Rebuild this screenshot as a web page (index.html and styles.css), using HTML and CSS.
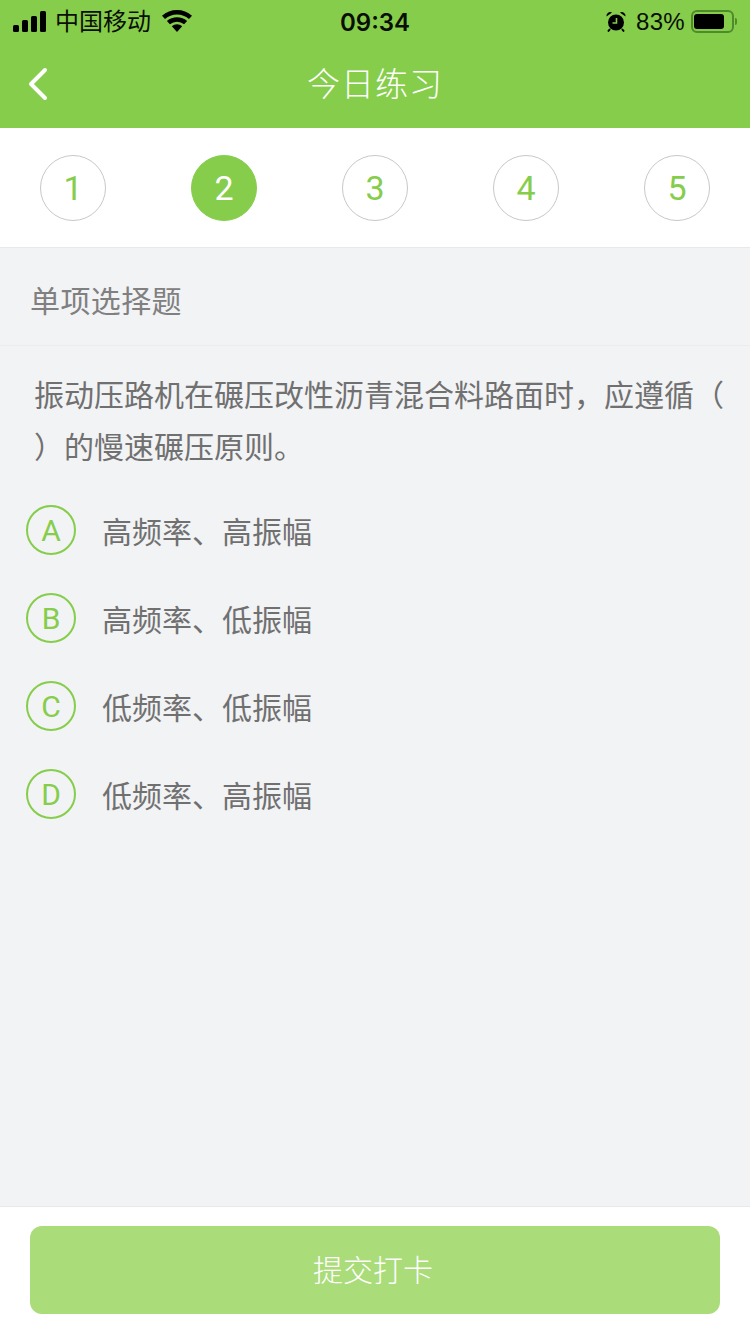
FILE: index.html
```html
<!DOCTYPE html>
<html lang="zh">
<head>
<meta charset="utf-8">
<title>今日练习</title>
<link rel="stylesheet" href="styles.css">
</head>
<body>
<div class="page">
  <header class="header">
    <div class="status">
      <div class="status-left">
        <svg class="signal" width="33" height="21" viewBox="0 0 33 21"><rect x="0" y="14" width="6" height="7" rx="1.5"/><rect x="9" y="9" width="6" height="12" rx="1.5"/><rect x="18" y="5" width="6" height="16" rx="1.5"/><rect x="27" y="0" width="6" height="21" rx="1.5"/></svg>
        <span class="carrier">中国移动</span>
        <svg class="wifi" width="30" height="22" viewBox="0 0 30 22"><path d="M15 22l-5.200-5.800a7.600 7.600 0 0 1 10.400 0z"/><path d="M7.900 14.300l-3-3.300a15.400 15.400 0 0 1 20.200 0l-3 3.300a10.800 10.800 0 0 0-14.200 0z"/><path d="M3 9l-3-3.300a22.700 22.700 0 0 1 30 0l-3 3.300a18.200 18.200 0 0 0-24 0z"/></svg>
      </div>
      <span class="time">09:34</span>
      <div class="status-right">
        <svg class="alarm" width="20" height="21" viewBox="0 0 20 21"><circle cx="10" cy="11.500" r="8"/><path d="M.5 5.500a3.800 3.800 0 0 1 5.600-4zM19.500 5.500a3.800 3.800 0 0 0-5.600-4z"/><path d="M4 18l-2 2.500M16 18l2 2.500" class="alarm-leg"/><path d="M10.500 7v5H6.500" class="alarm-hand"/></svg>
        <span class="percent">83%</span>
        <div class="battery"><div class="battery-fill"></div></div>
        <div class="battery-cap"></div>
      </div>
    </div>
    <div class="nav">
      <svg class="back" width="22" height="34" viewBox="0 0 22 34"><path d="M18 3L4 17l14 14"/></svg>
      <h1 class="title">今日练习</h1>
    </div>
  </header>

  <nav class="steps">
    <span class="step">1</span>
    <span class="step step-active">2</span>
    <span class="step">3</span>
    <span class="step">4</span>
    <span class="step">5</span>
  </nav>

  <main class="content">
    <div class="qtype">单项选择题</div>
    <p class="question">振动压路机在碾压改性沥青混合料路面时，应遵循（<br>）的慢速碾压原则。</p>
    <ul class="options">
      <li class="option"><span class="badge">A</span><span class="option-text">高频率、高振幅</span></li>
      <li class="option"><span class="badge">B</span><span class="option-text">高频率、低振幅</span></li>
      <li class="option"><span class="badge">C</span><span class="option-text">低频率、低振幅</span></li>
      <li class="option"><span class="badge">D</span><span class="option-text">低频率、高振幅</span></li>
    </ul>
  </main>

  <footer class="footer">
    <button class="submit" type="button">提交打卡</button>
  </footer>
</div>
</body>
</html>
```

FILE: styles.css
```css
* { box-sizing: border-box; }
html, body { margin: 0; padding: 0; }
body {
  font-family: "Liberation Sans", "Noto Sans CJK SC", sans-serif;
  background: #f2f3f5;
}
.page {
  width: 750px;
  height: 1334px;
  display: flex;
  flex-direction: column;
  overflow: hidden;
}
.header { height: 128px; background: #86cd4b; display: flex; flex-direction: column; }
.status {
  height: 40px;
  padding: 0 13px;
  display: grid;
  grid-template-columns: 1fr auto 1fr;
  align-items: center;
  color: #0a0f05;
}
.status-left { display: flex; align-items: center; }
.signal { fill: #000; margin-right: 9px; }
.carrier { font-size: 24px; line-height: 40px; padding-top: 2px; }
.wifi { fill: #000; margin-left: 11px; }
.time { font-size: 24px; font-family: "Inter", "Liberation Sans", sans-serif; font-weight: 600; padding-top: 2px; }
.status-right { display: flex; align-items: center; justify-content: flex-end; }
.alarm { fill: #000; margin-right: 10px; }
.alarm-leg { stroke: #000; stroke-width: 2; fill: none; }
.alarm-hand { stroke: #86cd4b; stroke-width: 1.600; fill: none; }
.percent { font-size: 24px; margin-right: 6px; padding-top: 2px; letter-spacing: 0.3px; }
.battery {
  width: 43px;
  height: 23px;
  border: 2px solid #4f8a2b;
  border-radius: 6px;
  padding: 2px 1px;
}
.battery-fill { width: 30px; height: 15px; background: #000; border-radius: 3px; }
.battery-cap { width: 2px; height: 7px; background: #4f8a2b; border-radius: 0 2px 2px 0; margin-left: 1px; }
.nav {
  flex: 1;
  position: relative;
  display: flex;
  align-items: center;
  justify-content: center;
  padding-top: 1px;
}
.back { position: absolute; left: 27px; top: 27px; fill: none; stroke: #fff; stroke-width: 4; stroke-linecap: round; stroke-linejoin: round; }
.title { margin: 0; font-size: 33px; font-weight: 300; color: #fff; letter-spacing: 1px; line-height: 40px; }
.steps {
  height: 120px;
  background: #fff;
  border-bottom: 1px solid #e8e9eb;
  padding: 1px 40px 0;
  display: flex;
  align-items: center;
  justify-content: space-between;
}
.step {
  width: 66px;
  height: 66px;
  border-radius: 50%;
  border: 1px solid #c8c8c8;
  color: #86cd4b;
  font-size: 34px;
  font-family: "Roboto", "Liberation Sans", sans-serif;
  font-weight: 400;
  display: flex;
  align-items: center;
  justify-content: center;
}
.step-active { background: #86cd4b; border-color: #86cd4b; color: #fff; }
.content { flex: 1; }
.qtype {
  height: 98px;
  padding: 4px 30px 0;
  border-bottom: 1px solid #ebecee;
  display: flex;
  align-items: center;
  font-size: 30px;
  letter-spacing: 0.4px;
  color: #808080;
}
.question {
  margin: 0;
  padding: 24px 24px 0 34px;
  font-size: 30px;
  line-height: 52px;
  color: #707070;
}
.options { list-style: none; margin: 31px 0 0; padding: 0 0 0 26px; display: flex; flex-direction: column; gap: 38px; }
.option { display: flex; align-items: center; height: 50px; }
.badge {
  width: 50px;
  height: 50px;
  border-radius: 50%;
  border: 2px solid #86cd4b;
  color: #86cd4b;
  font-size: 30px;
  font-family: "Roboto", "Liberation Sans", sans-serif;
  display: flex;
  align-items: center;
  justify-content: center;
}
.option-text { margin-left: 26px; font-size: 30px; color: #707070; }
.footer {
  height: 128px;
  background: #fff;
  border-top: 1px solid #e8e9eb;
  padding: 19px 30px 0;
}
.submit {
  display: block;
  width: 690px;
  height: 88px;
  border: 0;
  border-radius: 12px;
  background: #aadc79;
  color: #fff;
  font-family: inherit;
  font-size: 30px;
  font-weight: 300;
  padding: 0 4px 4px 0;
}
```
